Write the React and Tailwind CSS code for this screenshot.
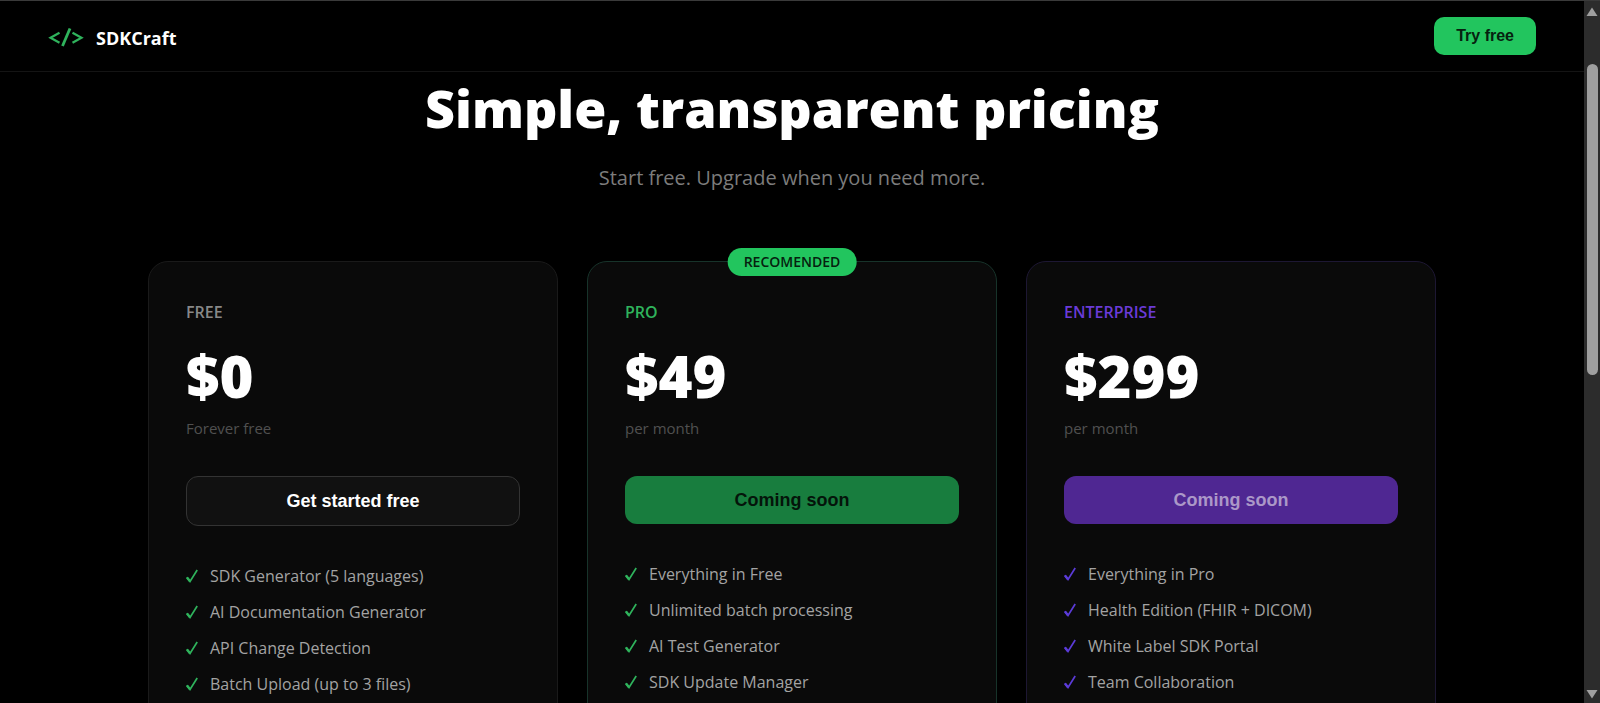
const plans = [
  {
    name: 'Free',
    price: '$0',
    period: 'Forever free',
    cta: 'Get started free',
    disabled: false,
    color: 'gray',
    features: [
      'SDK Generator (5 languages)',
      'AI Documentation Generator',
      'API Change Detection',
      'Batch Upload (up to 3 files)',
    ],
  },
  {
    name: 'Pro',
    price: '$49',
    period: 'per month',
    cta: 'Coming soon',
    disabled: true,
    badge: 'RECOMENDED',
    color: 'green',
    features: [
      'Everything in Free',
      'Unlimited batch processing',
      'AI Test Generator',
      'SDK Update Manager',
    ],
  },
  {
    name: 'Enterprise',
    price: '$299',
    period: 'per month',
    cta: 'Coming soon',
    disabled: true,
    color: 'purple',
    features: [
      'Everything in Pro',
      'Health Edition (FHIR + DICOM)',
      'White Label SDK Portal',
      'Team Collaboration',
    ],
  },
];

const colorClasses = {
  gray: {
    card: 'border-[#1a1a1a]',
    label: 'text-[#888888]',
    button: 'border border-[#333333] bg-[#111111] text-white',
    check: 'text-[#2fb35c]',
  },
  green: {
    card: 'border-[#17332a]',
    label: 'text-[#2fb35c]',
    button: 'bg-[#187d3e] text-[#04140a]',
    check: 'text-[#2fb35c]',
  },
  purple: {
    card: 'border-[#1d1733]',
    label: 'text-[#6b3bd8]',
    button: 'bg-[#4f2792] text-[#ab98c8]',
    check: 'text-[#5b3bd8]',
  },
};

export default function App() {
  return (
    <div className="flex h-screen overflow-hidden border-t border-[#3a3a3a] bg-black font-['Open_Sans','Noto_Sans',sans-serif] text-white">
      <div className="min-w-0 flex-1 overflow-hidden">
        <Header />
        <main className="px-6">
          <div className="text-center">
            <h1 className="text-[52px] leading-[72px] font-extrabold">Simple, transparent pricing</h1>
            <p className="mt-5 text-xl leading-7 text-[#7c7c7c]">Start free. Upgrade when you need more.</p>
          </div>

          <div className="mx-auto mt-[69px] grid max-w-[1288px] grid-cols-3 gap-[29px]">
            {plans.map((plan) => (
              <PlanCard key={plan.name} plan={plan} />
            ))}
          </div>
        </main>
      </div>
      <ScrollBar />
    </div>
  );
}

function Header() {
  return (
    <header className="flex h-[71px] items-center justify-between border-b border-[#141414] px-12">
      <a href="#" className="flex items-center gap-3 pt-1">
        <svg className="h-5 w-9 text-[#2fb35c]" viewBox="0 0 36 20" fill="none" stroke="currentColor" aria-hidden="true">
          <path d="M11.5 4.8 2.5 9.8 11.5 14.8" strokeWidth="2.2" />
          <path d="M22 0.5 14.5 18" strokeWidth="2.8" />
          <path d="M24.5 4.8 33.5 9.8 24.5 14.8" strokeWidth="2.2" />
        </svg>
        <span className="text-lg font-bold">SDKCraft</span>
      </a>
      <button className="h-[38px] rounded-[10px] bg-[#22c55e] px-[22px] font-['Liberation_Sans',sans-serif] text-base font-bold text-[#06210f]">
        Try free
      </button>
    </header>
  );
}

function PlanCard({ plan }) {
  const colors = colorClasses[plan.color];
  return (
    <section className={`relative rounded-[20px] border bg-[#0a0a0a] px-[37px] pt-[38px] pb-10 ${colors.card}`}>
      {plan.badge && (
        <span className="absolute -top-3.5 left-1/2 -translate-x-1/2 rounded-full bg-[#22c55e] px-4 text-sm leading-7 font-semibold text-[#06210f]">
          {plan.badge}
        </span>
      )}
      <h2 className={`text-base leading-6 font-semibold uppercase ${colors.label}`}>{plan.name}</h2>
      <div className="mt-5 text-[58px] leading-[64px] font-extrabold">{plan.price}</div>
      <p className="mt-2 text-[15px] leading-6 text-[#505050]">{plan.period}</p>
      <button
        disabled={plan.disabled}
        className={`mt-9 w-full rounded-xl py-3 font-['Liberation_Sans',sans-serif] text-lg leading-6 font-bold ${colors.button}`}
      >
        {plan.cta}
      </button>
      <ul className="mt-[38px] space-y-3">
        {plan.features.map((feature) => (
          <li key={feature} className="flex items-center gap-3 text-base leading-6 text-[#a3a3a3]">
            <CheckMark className={colors.check} />
            {feature}
          </li>
        ))}
      </ul>
    </section>
  );
}

function CheckMark({ className }) {
  return (
    <svg className={`h-3.5 w-3 shrink-0 ${className}`} viewBox="0 0 12 14" fill="none" stroke="currentColor" aria-hidden="true">
      <path d="M0.8 8.2 4 12.4 11.2 1" strokeWidth="1.7" />
      <path d="M1 8.4 4 12.2" strokeWidth="2.4" />
    </svg>
  );
}

function ScrollBar() {
  return (
    <div className="flex w-4 shrink-0 flex-col items-center bg-[#2c2c2c] pt-1.5 pb-1" aria-hidden="true">
      <svg className="h-2.5 w-3" viewBox="0 0 12 10">
        <path d="M6 0.5 11.5 9H0.5Z" fill="#a0a0a0" />
      </svg>
      <div className="mt-[47px] h-[45%] w-[11px] rounded-full bg-[#9f9f9f]" />
      <svg className="mt-auto h-2.5 w-3" viewBox="0 0 12 10">
        <path d="M0.5 1H11.5L6 9.5Z" fill="#a0a0a0" />
      </svg>
    </div>
  );
}
